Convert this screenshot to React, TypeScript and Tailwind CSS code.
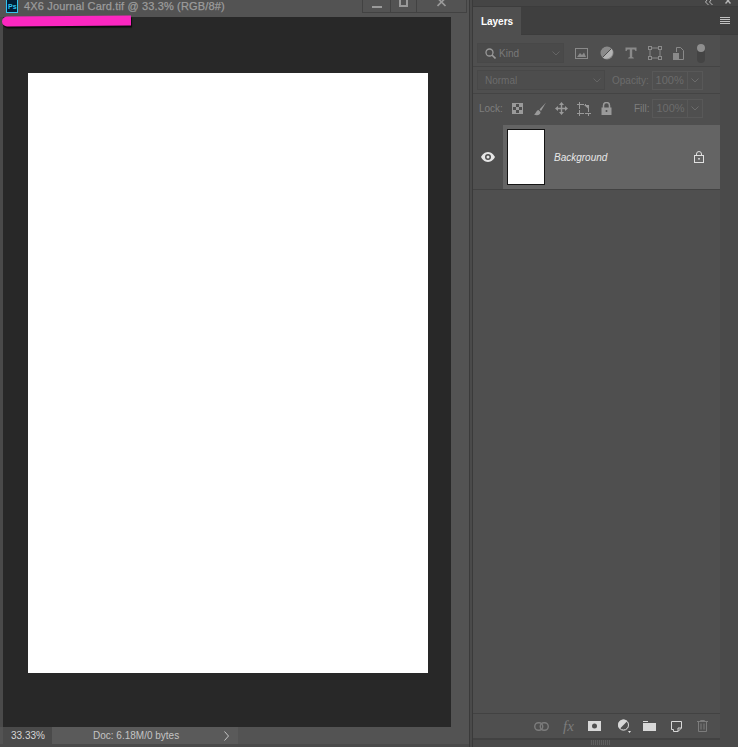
const font = "font-['Liberation_Sans',sans-serif]";

const FilterIcons = () => (
  <>
    {/* image */}
    <svg width="13" height="11" viewBox="0 0 13 11" className="text-[#8a8a8a]">
      <rect x="0.5" y="0.5" width="12" height="10" fill="none" stroke="currentColor" />
      <path d="M2 9 L5 5 L7 7 L9 4.5 L11 9 Z" fill="currentColor" />
    </svg>
    {/* adjustment */}
    <svg width="14" height="14" viewBox="0 0 14 14" className="ml-[12px] text-[#8a8a8a]">
      <circle cx="7" cy="7" r="6.5" fill="currentColor" />
      <path d="M11.5 2.5 A6.5 6.5 0 0 1 2.5 11.5 Z" fill="#d0d0d0" opacity="0.6" />
      <path d="M2.5 11.5 L11.5 2.5" stroke="#4f4f4f" />
    </svg>
    {/* type */}
    <svg width="12" height="12" viewBox="0 0 12 12" className="ml-[11px] text-[#8a8a8a]">
      <path d="M0.5 0.5 H11.5 V4 H10.5 L9.5 2.5 H7.2 V10 L8.8 10.8 V11.5 H3.2 V10.8 L4.8 10 V2.5 H2.5 L1.5 4 H0.5 Z" fill="currentColor" />
    </svg>
    {/* shape */}
    <svg width="14" height="14" viewBox="0 0 14 14" className="ml-[11px] text-[#8a8a8a]">
      <rect x="2" y="2" width="10" height="10" fill="none" stroke="currentColor" />
      <rect x="0.5" y="0.5" width="3" height="3" fill="#4f4f4f" stroke="currentColor" />
      <rect x="10.5" y="0.5" width="3" height="3" fill="#4f4f4f" stroke="currentColor" />
      <rect x="0.5" y="10.5" width="3" height="3" fill="#4f4f4f" stroke="currentColor" />
      <rect x="10.5" y="10.5" width="3" height="3" fill="#4f4f4f" stroke="currentColor" />
    </svg>
    {/* smart object */}
    <svg width="11" height="13" viewBox="0 0 11 13" className="ml-[11px] text-[#8a8a8a]">
      <path d="M3.5 5 V0.5 H7.5 L10.5 3.5 V12.5 H5" fill="none" stroke="currentColor" />
      <rect x="0" y="6" width="6" height="7" fill="currentColor" />
    </svg>
  </>
);

const LockIcons = () => (
  <div className="ml-[9px] flex items-center text-[#9a9a9a]">
    {/* transparency */}
    <svg width="11" height="11" viewBox="0 0 11 11">
      <rect x="0.5" y="0.5" width="10" height="10" fill="#4f4f4f" stroke="currentColor" />
      <path d="M1 1 H4 V4 H1 Z M7 1 H10 V4 H7 Z M4 4 H7 V7 H4 Z M1 7 H4 V10 H1 Z M7 7 H10 V10 H7 Z" fill="currentColor" />
    </svg>
    {/* brush */}
    <svg width="14" height="14" viewBox="0 0 14 14" className="ml-[10px]">
      <path d="M13 0.5 L6.5 7.5 L8 9 Z" fill="currentColor" />
      <path d="M5.5 8 C3 8.5 3.5 11 1 12.5 C4 14 8 13 7.5 10 Z" fill="currentColor" />
    </svg>
    {/* move */}
    <svg width="13" height="13" viewBox="0 0 13 13" className="ml-[8px]">
      <path d="M6.5 0 L9 3 H7.2 V5.8 H10 V4 L13 6.5 L10 9 V7.2 H7.2 V10 H9 L6.5 13 L4 10 H5.8 V7.2 H3 V9 L0 6.5 L3 4 V5.8 H5.8 V3 H4 Z" fill="currentColor" />
    </svg>
    {/* artboard */}
    <svg width="14" height="14" viewBox="0 0 14 14" className="ml-[9px]">
      <path d="M2.5 0 V14 M11.5 3 V14 M0 11.5 H14 M0 2.5 H9" fill="none" stroke="currentColor" strokeDasharray="7 1" />
      <path d="M7 3 L11.5 7 V3 Z" fill="currentColor" />
    </svg>
    {/* lock */}
    <svg width="11" height="13" viewBox="0 0 11 13" className="ml-[10px]">
      <path d="M2.5 6 V3.5 A3 3 0 0 1 8.5 3.5 V6" fill="none" stroke="currentColor" strokeWidth="1.5" />
      <path d="M0.5 5.5 H10.5 V13 H0.5 Z M5.5 8 A1 1 0 1 0 5.5 10 A1 1 0 1 0 5.5 8 Z" fill="currentColor" fillRule="evenodd" />
    </svg>
  </div>
);

const Stepper = ({ label }: { label: string }) => (
  <div className="flex h-[19px] w-[51px] border border-[#585858] text-[#6c6c6c]">
    <div className="flex w-[35px] items-center justify-center border-r border-[#585858] text-[11px]">{label}</div>
    <div className="flex flex-1 items-center justify-center">
      <svg width="8" height="5" viewBox="0 0 8 5">
        <path d="M0.5 0.5 L4 4 L7.5 0.5" fill="none" stroke="currentColor" />
      </svg>
    </div>
  </div>
);

const FooterIcons = () => (
  <div className="flex h-[24px] items-center justify-end pr-[12px]">
    {/* link */}
    <svg width="15" height="9" viewBox="0 0 15 9" className="text-[#7c7c7c]">
      <rect x="0.75" y="0.75" width="8" height="7.5" rx="3.7" fill="none" stroke="currentColor" strokeWidth="1.4" />
      <rect x="6.25" y="0.75" width="8" height="7.5" rx="3.7" fill="none" stroke="currentColor" strokeWidth="1.4" />
    </svg>
    <span className="ml-[14px] w-[12px] font-['Liberation_Serif',serif] text-[15px] leading-none text-[#7c7c7c] italic">fx</span>
    {/* mask */}
    <svg width="13" height="10" viewBox="0 0 13 10" className="ml-[13px]">
      <path d="M0 0 H13 V10 H0 Z M6.5 2.5 A2.5 2.5 0 1 0 6.5 7.5 A2.5 2.5 0 1 0 6.5 2.5 Z" fill="#d8d8d8" fillRule="evenodd" />
    </svg>
    {/* adjustment */}
    <svg width="14" height="14" viewBox="0 0 14 14" className="ml-[16px]">
      <circle cx="6.5" cy="6" r="5.5" fill="#d8d8d8" />
      <path d="M10.4 2.1 A5.5 5.5 0 0 1 2.6 9.9 Z" fill="#4f4f4f" />
      <circle cx="6.5" cy="6" r="5" fill="none" stroke="#d8d8d8" />
      <path d="M11 12 H14 L12.5 14 Z" fill="#e8e8e8" />
    </svg>
    {/* folder */}
    <svg width="13" height="10" viewBox="0 0 13 10" className="ml-[12px]">
      <path d="M0 0 H5 V1 H0 Z M0 2 H13 V10 H0 Z" fill="#d8d8d8" />
    </svg>
    {/* new layer */}
    <svg width="11" height="11" viewBox="0 0 11 11" className="ml-[15px]">
      <path d="M0.5 0.5 H10.5 V7 L7 10.5 H2.5 V8.5 H0.5 Z" fill="none" stroke="#d8d8d8" />
      <path d="M7 10.5 V7 H10.5" fill="none" stroke="#d8d8d8" />
    </svg>
    {/* trash */}
    <svg width="11" height="12" viewBox="0 0 11 12" className="ml-[15px] text-[#7c7c7c]">
      <path d="M0 1.5 H11 M3.5 1.5 V0.5 H7.5 V1.5 M1.5 1.5 V11.5 H9.5 V1.5 M4 3.5 V9.5 M7 3.5 V9.5" fill="none" stroke="currentColor" />
    </svg>
  </div>
);

export default function App() {
  return (
    <div className={`${font} relative flex h-[747px] w-[738px] overflow-hidden bg-[#4a4a4a]`}>
      {/* document window */}
      <div className="flex w-[470px] shrink-0 flex-col border-r border-[#3a3a3a]">
        <div className="flex h-[17px] shrink-0 bg-[#535353]">
          <svg width="12" height="13" viewBox="0 0 12 13" className="ml-[6px] shrink-0">
            <rect x="0.5" y="-1" width="11" height="13.5" fill="#001e36" stroke="#31c5f0" />
            <text x="2" y="9" fontSize="7" fontWeight="700" fill="#31c5f0" fontFamily="Liberation Sans">Ps</text>
          </svg>
          <div className="ml-[6px] text-[11px] leading-[13px] tracking-[0.15px] whitespace-nowrap text-[#9c9c9c] [-webkit-text-stroke:0.25px_#9c9c9c]">
            4X6 Journal Card.tif @ 33.3% (RGB/8#)
          </div>
          <div className="ml-auto mr-[2px] flex h-[13px] border-x border-b border-[#424242]">
            <div className="flex w-[28px] items-start justify-center border-r border-[#424242] pt-[6px]">
              <div className="h-[2px] w-[10px] bg-[#9a9a9a]" />
            </div>
            <div className="flex w-[26px] items-start justify-center border-r border-[#424242]">
              <div className="h-[7px] w-[9px] border-x-2 border-b-2 border-[#9a9a9a]" />
            </div>
            <div className="flex w-[49px] items-start justify-center">
              <svg width="10" height="7" viewBox="0 0 10 7">
                <path d="M0.5 -2 L8.5 6 M8.5 -2 L0.5 6" stroke="#9a9a9a" strokeWidth="1.7" />
              </svg>
            </div>
          </div>
        </div>
        <div className="flex min-h-0 flex-1 pl-[3px]">
          <div className="flex w-[448px] items-start bg-[#282828] pt-[56px] pl-[25px]">
            <div className="h-[600px] w-[400px] bg-white" />
          </div>
          <div className="flex-1 bg-[#535353]" />
        </div>
        <div className="flex h-[17px] shrink-0 items-center bg-[#535353] pl-[3px] text-[10px]">
          <div className="flex h-full w-[49px] items-center bg-[#4a4a4a] pl-[8px] text-[#d6d6d6]">33.33%</div>
          <div className="flex h-full w-[186px] items-center bg-[#5a5a5a] text-[#c4c4c4]">
            <span className="ml-[41px]">Doc: 6.18M/0 bytes</span>
            <svg width="5" height="10" viewBox="0 0 5 10" className="ml-auto mr-[9px]">
              <path d="M0.5 0.5 L4.5 5 L0.5 9.5" fill="none" stroke="#c4c4c4" />
            </svg>
          </div>
        </div>
        <div className="h-[3px] shrink-0 bg-[#4a4a4a]" />
      </div>

      {/* layers panel */}
      <div className="ml-[2px] flex min-w-0 flex-1 flex-col border-l border-[#3a3a3a]">
        <div className="flex h-[6px] shrink-0 justify-end overflow-hidden bg-[#454545] pr-[7px] text-[#b8b8b8]">
          <svg width="8" height="6" viewBox="0 0 8 6" className="mr-[12px]">
            <path d="M3.5 -2 L0.5 2 L3.5 5 M7.5 -2 L4.5 2 L7.5 5" fill="none" stroke="currentColor" />
          </svg>
          <svg width="6" height="6" viewBox="0 0 6 6">
            <path d="M0.5 -2 L5.5 3.5 M5.5 -2 L0.5 3.5" stroke="currentColor" strokeWidth="1.4" />
          </svg>
        </div>
        <div className="flex h-[29px] shrink-0 items-center justify-between border-y border-[#3c3c3c] bg-[#3f3f3f]">
          <div className="-mb-[1px] flex h-[28px] w-[48px] items-center justify-center self-end bg-[#4f4f4f] text-[10px] font-bold text-white">
            Layers
          </div>
          <div className="mr-[8px] flex w-[10px] flex-col gap-[1px]">
            <div className="h-px bg-[#c0c0c0]" />
            <div className="h-px bg-[#c0c0c0]" />
            <div className="h-px bg-[#c0c0c0]" />
            <div className="h-px bg-[#c0c0c0]" />
          </div>
        </div>

        <div className="flex min-h-0 flex-1">
          <div className="flex w-[247px] flex-col bg-[#4f4f4f]">
            {/* filter row */}
            <div className="flex h-[32px] items-center border-b border-[#444444] pt-[5px] pl-[4px]">
              <div className="flex h-[20px] w-[87px] items-center border border-[#484848] bg-[#4a4a4a] pl-[7px] text-[#797979]">
                <svg width="11" height="11" viewBox="0 0 11 11">
                  <circle cx="4.5" cy="4.5" r="3.5" fill="none" stroke="#9a9a9a" strokeWidth="1.3" />
                  <path d="M7 7 L10.5 10.5" stroke="#9a9a9a" strokeWidth="1.6" />
                </svg>
                <span className="ml-[3px] text-[10px]">Kind</span>
                <svg width="8" height="5" viewBox="0 0 8 5" className="mr-[3px] ml-auto">
                  <path d="M0.5 0.5 L4 4 L7.5 0.5" fill="none" stroke="#656565" />
                </svg>
              </div>
              <div className="ml-[11px] flex items-center">
                <FilterIcons />
              </div>
              <div className="relative ml-[13px] h-[19px] w-[8px] rounded-full bg-[#444444]">
                <div className="absolute top-0 left-0 h-[8px] w-[8px] rounded-full bg-[#8f8f8f]" />
              </div>
            </div>
            {/* blend row */}
            <div className="flex h-[27px] items-center border-b border-[#444444] pl-[4px]">
              <div className="flex h-[20px] w-[128px] items-center border border-[#484848] bg-[#4d4d4d] pl-[7px] text-[10px] text-[#6c6c6c]">
                Normal
                <svg width="8" height="5" viewBox="0 0 8 5" className="mr-[3px] ml-auto">
                  <path d="M0.5 0.5 L4 4 L7.5 0.5" fill="none" stroke="#656565" />
                </svg>
              </div>
              <span className="ml-[7px] text-[10px] text-[#6c6c6c]">Opacity:</span>
              <div className="ml-[3px]">
                <Stepper label="100%" />
              </div>
            </div>
            {/* lock row */}
            <div className="flex h-[31px] items-center pb-[2px] pl-[6px]">
              <span className="text-[10px] text-[#7e7e7e]">Lock:</span>
              <LockIcons />
              <span className="ml-[22px] text-[10px] text-[#7e7e7e]">Fill:</span>
              <div className="ml-[3px]">
                <Stepper label="100%" />
              </div>
            </div>
            {/* layer row */}
            <div className="flex h-[65px] items-center border-b border-[#424242]">
              <div className="flex h-full w-[30px] shrink-0 items-center justify-center">
                <svg width="14" height="10" viewBox="0 0 14 10">
                  <path d="M7 0 C10.5 0 13 3 14 5 C13 7 10.5 10 7 10 C3.5 10 1 7 0 5 C1 3 3.5 0 7 0 Z M7 2 A3 3 0 1 0 7 8 A3 3 0 1 0 7 2 Z" fill="#e6e6e6" fillRule="evenodd" />
                  <circle cx="7" cy="5" r="1.5" fill="#e6e6e6" />
                </svg>
              </div>
              <div className="flex h-full flex-1 items-center bg-[#646464] pl-[4px]">
                <div className="h-[56px] w-[38px] shrink-0 border border-[#141414] bg-white" />
                <span className="ml-[9px] text-[10px] text-[#e8e8e8] italic">Background</span>
                <svg width="10" height="12" viewBox="0 0 10 12" className="mr-[16px] ml-auto">
                  <path d="M2.5 5 V3 A2.5 2.5 0 0 1 7.5 3 V5" fill="none" stroke="#e0e0e0" />
                  <rect x="0.5" y="4.5" width="9" height="7" fill="none" stroke="#e0e0e0" />
                  <rect x="4.2" y="7" width="1.6" height="1.6" fill="#e0e0e0" />
                </svg>
              </div>
            </div>
            <div className="flex-1" />
            <div className="border-t border-[#424242]">
              <FooterIcons />
            </div>
            {/* resize grip */}
            <div className="flex h-[9px] justify-center gap-[1px] border-t-2 border-[#424242] bg-[#4a4a4a] pl-[8px]">
              <div className="h-[5px] w-px bg-[#5e5e5e]" />
              <div className="h-[5px] w-px bg-[#5e5e5e]" />
              <div className="h-[5px] w-px bg-[#5e5e5e]" />
              <div className="h-[5px] w-px bg-[#5e5e5e]" />
              <div className="h-[5px] w-px bg-[#5e5e5e]" />
              <div className="h-[5px] w-px bg-[#5e5e5e]" />
              <div className="h-[5px] w-px bg-[#5e5e5e]" />
              <div className="h-[5px] w-px bg-[#5e5e5e]" />
              <div className="h-[5px] w-px bg-[#5e5e5e]" />
              <div className="h-[5px] w-px bg-[#5e5e5e]" />
            </div>
          </div>
          <div className="flex-1 bg-[#4a4a4a]" />
        </div>
      </div>

      {/* pink marker scribbled over the title */}
      <div className="absolute top-[16px] left-[2px] h-[10px] w-[129px] -rotate-[0.4deg] rounded-l-full bg-[#fb27c0] shadow-[1px_2px_1px_rgba(0,0,0,0.7)]" />
    </div>
  );
}
